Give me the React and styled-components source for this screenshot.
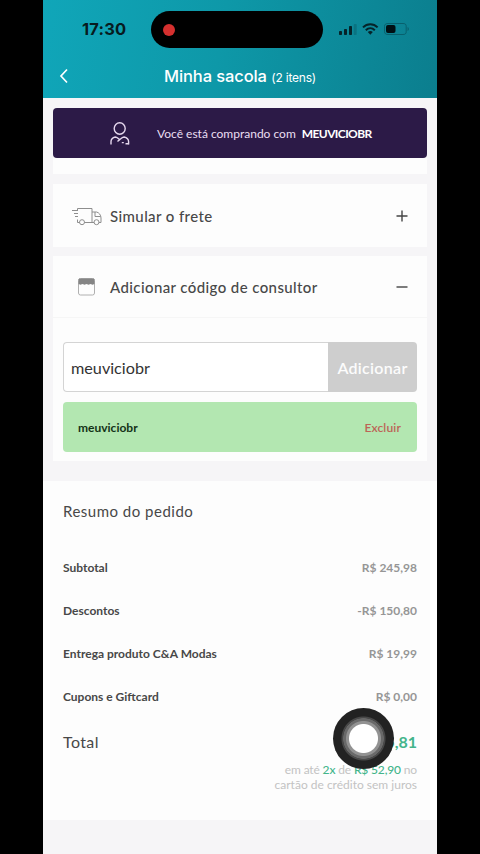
import React, { useState } from 'react';
import styled, { createGlobalStyle } from 'styled-components';

const GlobalStyle = createGlobalStyle`
  * {
    box-sizing: border-box;
  }
  body {
    margin: 0;
    background: #000;
    font-family: Lato, 'Liberation Sans', sans-serif;
    color: #484848;
  }
`;

const Screen = styled.div`
  width: 394px;
  height: 854px;
  margin: 0 auto;
  position: relative;
  overflow: hidden;
  background: #f6f5f7;
`;

const Header = styled.header`
  height: 98px;
  background: linear-gradient(100deg, #10a6b9 0%, #0e98a8 45%, #0b7e8e 100%);
`;

const StatusBar = styled.div`
  height: 58px;
  padding: 11px 27px 0 39px;
  display: flex;
`;

const Clock = styled.div`
  width: 69px;
  padding-top: 8px;
  font: 700 16.5px/20px Inter, sans-serif;
  letter-spacing: 0.2px;
  color: #071b20;
`;

const Island = styled.div`
  width: 172px;
  height: 37px;
  border-radius: 19px;
  background: #000;
  padding: 13px 12px;
`;

const RecordDot = styled.div`
  width: 12px;
  height: 12px;
  border-radius: 50%;
  background: #d5302f;
`;

const StatusIconsSvg = styled.svg`
  width: 72px;
  height: 16px;
  margin: 10px 0 0 auto;
`;

const TitleBar = styled.div`
  height: 40px;
  display: grid;
  grid-template-columns: 40px 1fr 40px;
  align-items: center;
`;

const BackButton = styled.button`
  border: 0;
  background: none;
  padding: 0 0 5px 12px;
  display: flex;
  cursor: pointer;
`;

const Title = styled.h1`
  margin: 0;
  padding-bottom: 2px;
  text-align: center;
  color: #fff;
  font: 500 16.5px/22px Inter, sans-serif;
  letter-spacing: -0.1px;
  white-space: nowrap;

  small {
    font-size: 12px;
    font-weight: 400;
    letter-spacing: -0.2px;
  }
`;

const Panels = styled.main`
  padding: 10px 10px 0;
`;

const Seller = styled.div`
  height: 50px;
  border-radius: 4px;
  background: #2c1a47;
  color: #eadff2;
  display: flex;
  align-items: center;
  padding-left: 56px;
  font-size: 12px;
  white-space: nowrap;

  svg {
    margin-right: 26px;
  }
  strong {
    margin-left: 6px;
    letter-spacing: -0.6px;
    color: #fff;
  }
`;

const ListEnd = styled.div`
  height: 16px;
  background: #fdfdfd;
`;

const Card = styled.section`
  margin-top: ${({ $gap }) => $gap}px;
  height: ${({ $height }) => $height}px;
  background: #fdfdfd;
`;

const CardHeader = styled.div`
  height: ${({ $height }) => $height}px;
  padding: 0 19px;
  display: flex;
  align-items: center;
  border-bottom: ${({ $line }) => ($line ? '1px solid #f6f6f6' : '0')};
`;

const IconSlot = styled.span`
  width: 38px;
  padding-left: ${({ $indent }) => $indent || 0}px;
  display: flex;
`;

const CardTitle = styled.h2`
  margin: 0;
  flex: 1;
  font-size: 15px;
  font-weight: 500;
  letter-spacing: 0.4px;
`;

const CodeForm = styled.div`
  margin: 24px 10px 0;
  height: 50px;
  display: flex;
`;

const CodeInput = styled.input`
  flex: 1;
  min-width: 0;
  border: 1px solid #d4d4d4;
  border-right: 0;
  border-radius: 4px 0 0 4px;
  padding: 0 7px;
  outline: 0;
  background: #fff;
  color: #333;
  font: 400 16.2px Lato, sans-serif;
`;

const AddButton = styled.button`
  width: 89px;
  border: 0;
  padding: 0;
  border-radius: 0 4px 4px 0;
  background: #cecece;
  color: #fcfcfc;
  font: 600 16px Lato, sans-serif;
  letter-spacing: 0.3px;
`;

const CodeTag = styled.div`
  margin: 10px 10px 0;
  height: 50px;
  padding: 0 16px 0 15px;
  border-radius: 4px;
  background: #b3e7b1;
  display: flex;
  align-items: center;
  justify-content: space-between;
  font-size: 12px;
  font-weight: 700;
  color: #143317;
`;

const RemoveLink = styled.span`
  color: #bd6456;
  font-weight: 600;
  letter-spacing: 0.15px;
`;

const Summary = styled.section`
  margin-top: 20px;
  height: 339px;
  padding: 19px 20px 0;
  background: #fdfdfd;
`;

const SummaryTitle = styled.h2`
  margin: 0 0 24px;
  font-size: 15px;
  line-height: 22px;
  font-weight: 400;
  letter-spacing: 0.5px;
`;

const Row = styled.div`
  height: 43px;
  display: flex;
  align-items: center;
  justify-content: space-between;
  font-size: 12px;
  font-weight: 700;
`;

const Price = styled.span`
  color: #969696;
`;

const TotalRow = styled.div`
  height: 47px;
  display: flex;
  align-items: center;
  justify-content: space-between;
  font-size: 16px;
  letter-spacing: 0.4px;

  strong {
    letter-spacing: 0;
    color: #43b58b;
  }
`;

const Installments = styled.p`
  margin: -2px 0 0;
  text-align: right;
  font-size: 12px;
  line-height: 14.5px;
  color: #c3c3c3;

  span {
    letter-spacing: -0.15px;
  }
  b {
    font-weight: 500;
    color: #43b58b;
  }
`;

const TouchPointer = styled.div`
  position: absolute;
  left: 290px;
  top: 708px;
  width: 61px;
  height: 61px;
  border-radius: 50%;
  background: radial-gradient(
    circle closest-side,
    #fff 0 14px,
    #929292 15px 17px,
    #696969 18px 20px,
    #484848 20.5px 21.5px,
    #222 22.5px
  );
`;

const StatusIcons = () => (
  <StatusIconsSvg viewBox="0 0 72 16">
    <g fill="#062329">
      <rect x="1" y="10" width="3" height="4" rx="0.8" />
      <rect x="6" y="8" width="3" height="6" rx="0.8" />
      <rect x="11" y="5" width="3" height="9" rx="0.8" />
      <rect x="15.7" y="3" width="3" height="11" rx="0.8" opacity="0.2" />
    </g>
    <g fill="none" stroke="#062329" strokeWidth="2">
      <path d="M25 6.4c4.2-4.1 10.4-4.1 14.6 0" />
      <path d="M27.8 9.2c2.7-2.6 6.3-2.6 9 0" />
    </g>
    <path d="M29.8 11c1.5-1.3 3.5-1.3 5 0l-2.5 2.7z" fill="#062329" />
    <path
      d="M50 2.5h15c2.5 0 3.2 1 3.2 3v5c0 2-.7 3-3.2 3H50c-2.5 0-3.5-1-3.5-3v-5c0-2 1-3 3.5-3z"
      fill="none"
      stroke="#07515d"
      strokeOpacity="0.7"
    />
    <rect x="48" y="4" width="9.5" height="8" rx="2" fill="#000f13" />
    <path d="M69.7 6c1.2.7 1.2 3.3 0 4z" fill="#07515d" />
  </StatusIconsSvg>
);

const PersonIcon = () => (
  <svg width="22" height="26" viewBox="0 0 22 26" fill="none" stroke="#e6d8ee" strokeWidth="1.4">
    <ellipse cx="10.7" cy="8.5" rx="5.5" ry="5.8" />
    <path d="M2 24.5v-2.7c0-3 2-4.3 4.3-4.8 2 0 2.6 1.7 4.4 2.6 1.8-.9 2.4-2.6 4.4-2.6 2.4.5 4.5 1.8 4.5 4.8v2.7" />
    <path d="M10.7 19.6l-2.2 2M12.8 22.6h2M16.5 23.8h3.1" />
  </svg>
);

const TruckIcon = () => (
  <svg width="31" height="19" viewBox="0 0 31 19" fill="none" stroke="#8e8e8e">
    <path d="M5.500 4V1.500H20v14h-7.700M7.700 15.500H5.500v-3M0 3.500h6M2 6.500h4M3 9.500h3M20 5h4.500c2.500.5 4.500 3 4.500 6v4.500h-2.200M22.200 15.500H20M23 5v4.500h5.500" />
    <circle cx="10" cy="15.2" r="2.5" />
    <circle cx="24.5" cy="15.2" r="2.5" />
  </svg>
);

const StoreIcon = () => (
  <svg width="17" height="18" viewBox="0 0 17 18">
    <rect x="0.5" y="0.5" width="16" height="16.5" rx="2" fill="none" stroke="#b0b0b0" />
    <path
      d="M2 .5h13c1 0 1.5.5 1.5 1.5v4l-2 .8-2-.8-2 .8-2-.8-2 .8-2-.8-2 .8-2-.8V2C.5 1 1 .5 2 .5z"
      fill="#858585"
    />
  </svg>
);

const ToggleIcon = ({ open }) => (
  <svg width="12" height="12" viewBox="0 0 12 12" fill="none" stroke="#444" strokeWidth="1.4">
    <path d={open ? 'M.5 6h11' : 'M.5 6h11M6 .5v11'} />
  </svg>
);

const rows = [
  { label: 'Subtotal', value: 'R$ 245,98' },
  { label: 'Descontos', value: '-R$ 150,80' },
  { label: 'Entrega produto C&A Modas', value: 'R$ 19,99' },
  { label: 'Cupons e Giftcard', value: 'R$ 0,00' },
];

const App = () => {
  const [code, setCode] = useState('meuviciobr');

  return (
    <>
      <GlobalStyle />
      <Screen>
        <Header>
          <StatusBar>
            <Clock>17:30</Clock>
            <Island>
              <RecordDot />
            </Island>
            <StatusIcons />
          </StatusBar>
          <TitleBar>
            <BackButton aria-label="Voltar">
              <svg width="18" height="16" viewBox="0 0 18 16" fill="none" stroke="#fff" strokeWidth="1.7">
                <path d="M12 1.5L6 8l6 6.5" />
              </svg>
            </BackButton>
            <Title>
              Minha sacola <small>(2 itens)</small>
            </Title>
          </TitleBar>
        </Header>
        <Panels>
          <Seller>
            <PersonIcon />
            Você está comprando com <strong>MEUVICIOBR</strong>
          </Seller>
          <ListEnd />
          <Card $gap={10} $height={63}>
            <CardHeader $height={64}>
              <IconSlot>
                <TruckIcon />
              </IconSlot>
              <CardTitle>Simular o frete</CardTitle>
              <ToggleIcon />
            </CardHeader>
          </Card>
          <Card $gap={9} $height={205}>
            <CardHeader $height={62} $line>
              <IconSlot $indent={6}>
                <StoreIcon />
              </IconSlot>
              <CardTitle>Adicionar código de consultor</CardTitle>
              <ToggleIcon open />
            </CardHeader>
            <CodeForm>
              <CodeInput value={code} onChange={(e) => setCode(e.target.value)} />
              <AddButton>Adicionar</AddButton>
            </CodeForm>
            <CodeTag>
              meuviciobr
              <RemoveLink>Excluir</RemoveLink>
            </CodeTag>
          </Card>
        </Panels>
        <Summary>
          <SummaryTitle>Resumo do pedido</SummaryTitle>
          {rows.map((row) => (
            <Row key={row.label}>
              {row.label}
              <Price>{row.value}</Price>
            </Row>
          ))}
          <TotalRow>
            Total
            <strong>R$ 105,81</strong>
          </TotalRow>
          <Installments>
            <span>
              em até <b>2x</b> de <b>R$ 52,90</b> no
            </span>
            <br />
            cartão de crédito sem juros
          </Installments>
        </Summary>
        <TouchPointer />
      </Screen>
    </>
  );
};

export default App;
